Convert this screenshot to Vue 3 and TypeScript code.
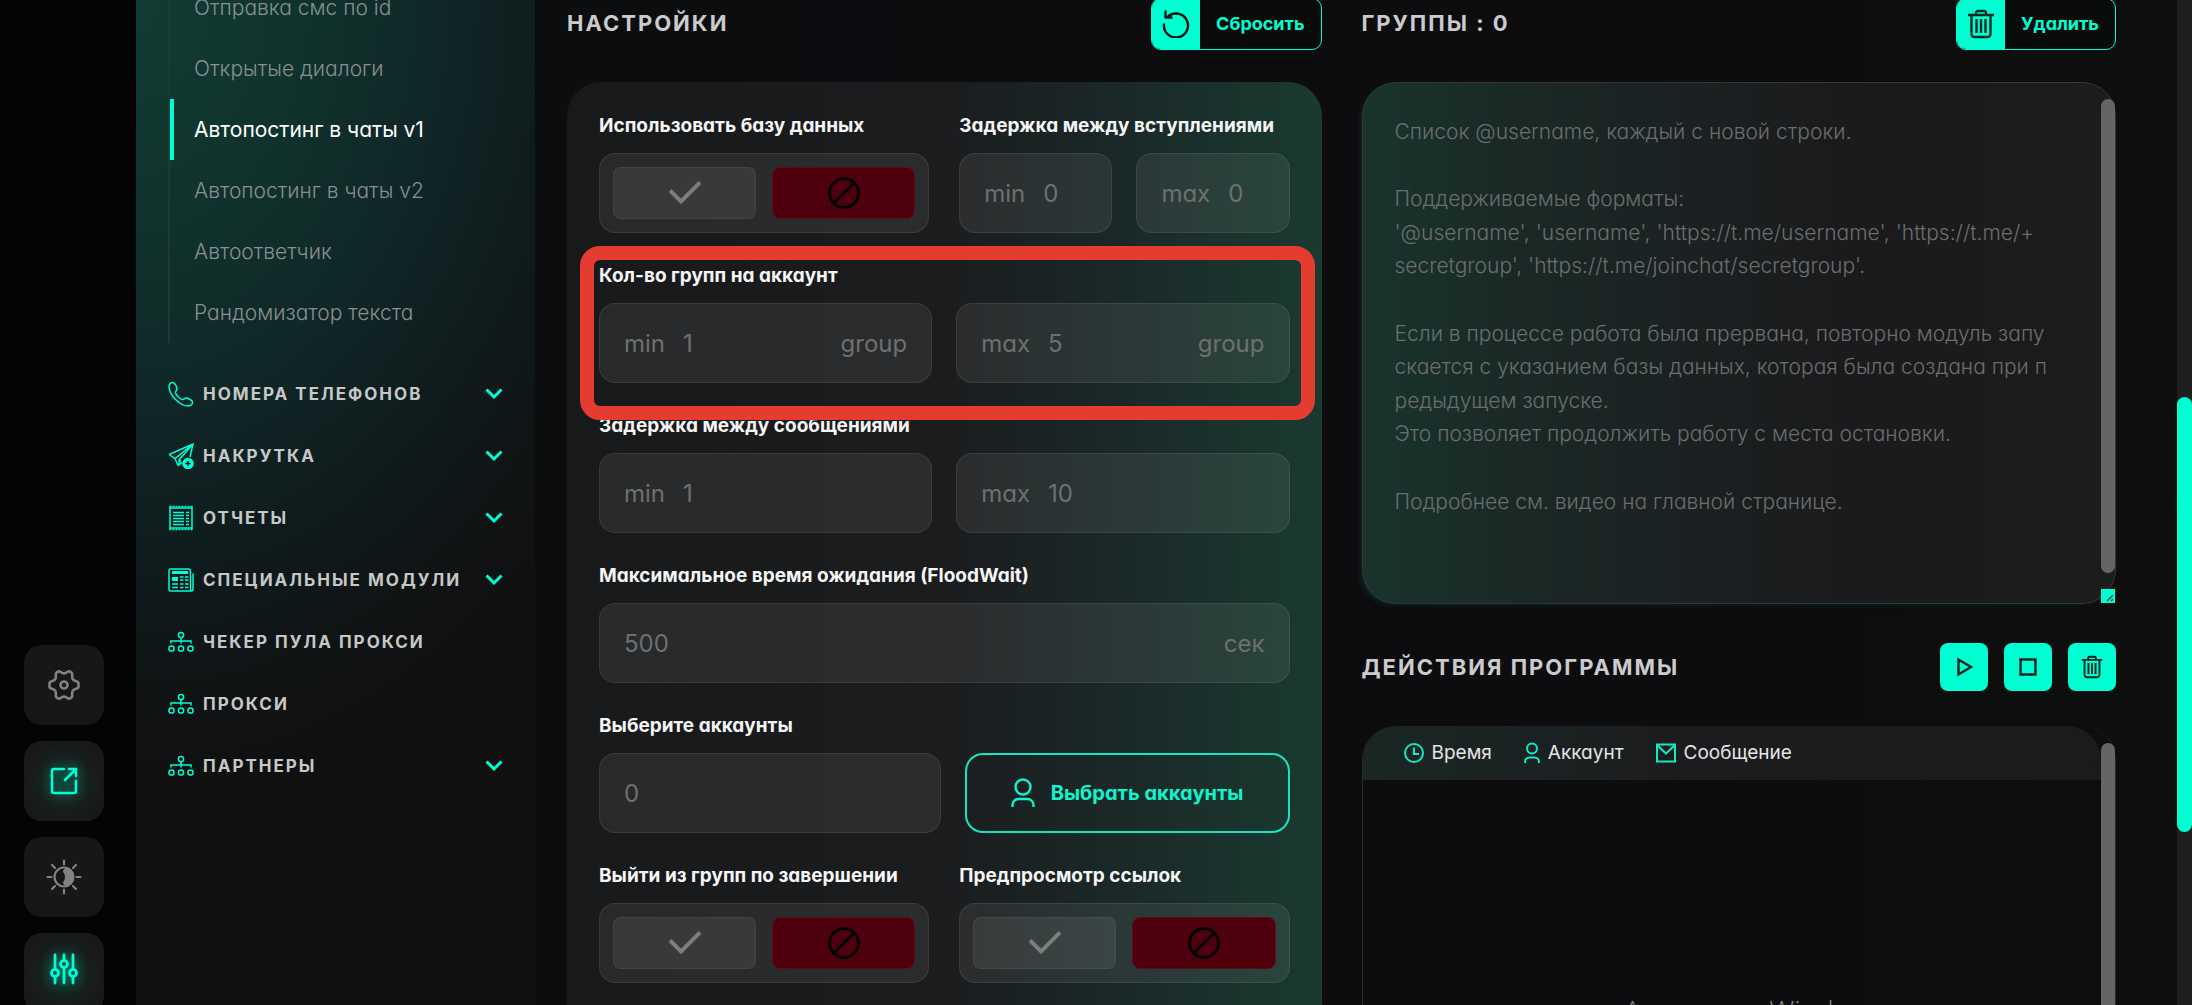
<script setup lang="ts">
import { ref } from 'vue'

interface MenuItem { title: string; icon: 'phone' | 'send' | 'report' | 'news' | 'tree'; expandable: boolean }
interface RailItem { title: string; icon: 'gear' | 'open' | 'theme' | 'tune'; active: boolean }

const subItems: string[] = [
  'Отправка смс по id',
  'Открытые диалоги',
  'Автопостинг в чаты v1',
  'Автопостинг в чаты v2',
  'Автоответчик',
  'Рандомизатор текста',
]
const activeSub = ref(2)

const menu: MenuItem[] = [
  { title: 'Номера телефонов', icon: 'phone', expandable: true },
  { title: 'Накрутка', icon: 'send', expandable: true },
  { title: 'Отчеты', icon: 'report', expandable: true },
  { title: 'Специальные модули', icon: 'news', expandable: true },
  { title: 'Чекер пула прокси', icon: 'tree', expandable: false },
  { title: 'Прокси', icon: 'tree', expandable: false },
  { title: 'Партнеры', icon: 'tree', expandable: true },
]

const rail: RailItem[] = [
  { title: 'Параметры', icon: 'gear', active: false },
  { title: 'Открыть', icon: 'open', active: true },
  { title: 'Тема', icon: 'theme', active: false },
  { title: 'Фильтры', icon: 'tune', active: true },
]

const useDatabase = ref(false)
const leaveGroups = ref(false)
const linkPreview = ref(false)

const groups = ref('')
const groupsHint = [
  'Список @username, каждый с новой строки.',
  '',
  'Поддерживаемые форматы:',
  "'@username', 'username', 'https://t.me/username', 'https://t.me/+",
  "secretgroup', 'https://t.me/joinchat/secretgroup'.",
  '',
  'Если в процессе работа была прервана, повторно модуль запу',
  'скается с указанием базы данных, которая была создана при п',
  'редыдущем запуске.',
  'Это позволяет продолжить работу с места остановки.',
  '',
  'Подробнее см. видео на главной странице.',
].join('\n')
</script>

<template>
  <div class="app">
    <nav class="rail" aria-label="Быстрые действия">
      <button v-for="item in rail" :key="item.icon" type="button" class="rail-btn" :class="{ active: item.active }" :aria-label="item.title">
        <svg v-if="item.icon === 'gear'" width="32" height="32" viewBox="0 0 32 32" fill="none" stroke="currentColor" stroke-width="2.6" stroke-linejoin="round">
          <path d="M10.500 2.400 C12.500 1.600 12.600 4.400 16 4.400 S19.500 1.600 21.500 2.400 L23.500 3.500 C25.300 4.900 23 7.500 24.800 10.300 C26.500 13 30.500 11.600 30.500 14.200 V17.800 C30.500 20.400 26.500 19 24.800 21.700 C23 24.500 25.300 27.100 23.500 28.500 L21.500 29.600 C19.500 30.400 19.400 27.600 16 27.600 S12.500 30.400 10.500 29.600 L8.500 28.500 C6.700 27.100 9 24.500 7.200 21.700 C5.500 19 1.500 20.400 1.500 17.800 V14.200 C1.500 11.600 5.500 13 7.200 10.300 C9 7.500 6.700 4.900 8.500 3.500 Z" />
          <circle cx="16" cy="16" r="3.500" />
        </svg>
        <svg v-else-if="item.icon === 'open'" width="32" height="32" viewBox="0 0 32 32" fill="none" stroke="currentColor" stroke-width="2.6" stroke-linejoin="round" stroke-linecap="round">
          <path d="M16 4H6a2 2 0 0 0-2 2v20a2 2 0 0 0 2 2h20a2 2 0 0 0 2-2V16M21 4h7v7M28 4 17 15" />
        </svg>
        <svg v-else-if="item.icon === 'theme'" width="36" height="36" viewBox="0 0 36 36" fill="none" stroke="currentColor" stroke-width="2.200" stroke-linecap="round">
          <circle cx="18" cy="18" r="9.500" />
          <path d="M18 1.500v4M18 30.500v4M1.500 18h4M30.500 18h4M6 6l3 3M27 27l3 3M6 30l3-3M27 9l3-3" />
          <path d="M20.500 8.800a9.500 9.500 0 0 1 0 18.400q-3.500-1.500-3.500-4 2-2.200 2-5.200t-2-5.200q0-2.500 3.500-4z" fill="currentColor" stroke="none" />
        </svg>
        <svg v-else width="32" height="42" viewBox="0 0 32 42" fill="none" stroke="currentColor" stroke-width="2.800" stroke-linecap="round">
          <path d="M7 3v14M7 25v6M16 3v5M16 16v15M25 3v14M25 25v6" />
          <circle cx="7" cy="21" r="3.500" /><circle cx="16" cy="12" r="3.500" /><circle cx="25" cy="21" r="3.500" />
        </svg>
      </button>
    </nav>

    <aside class="sidebar">
      <ul class="sub">
        <li v-for="(item, i) in subItems" :key="item">
          <a href="#" :class="{ current: i === activeSub }" @click.prevent="activeSub = i">{{ item }}</a>
        </li>
      </ul>
      <ul class="menu">
        <li v-for="item in menu" :key="item.title">
          <a href="#" @click.prevent>
            <svg v-if="item.icon === 'phone'" class="mi" viewBox="0 0 26 26">
              <path d="M1 5.500C1 3 3.500 1 5 1.500 7 2 9 6 9 8c0 1.500-2 2.500-1.500 4 .8 2.200 4.300 5.700 6.500 6.500 1.500.5 2.500-1.500 4-1.500 2 0 6 2 6.500 4 .5 1.500-1.500 4-4 4C12 25 1 14 1 5.500z" />
            </svg>
            <svg v-else-if="item.icon === 'send'" class="mi" viewBox="0 0 26 26">
              <path d="M1 11.500 25 1 22 14M1 11.500 7 15.500 25 1 11 17v5l3-3M7 15.500l3 7M11 17l2 1" />
              <circle cx="20" cy="20.500" r="5" fill="#00fed3" /><path d="M20 18v5M17.500 20.500h5" stroke="#0f1a1b" />
            </svg>
            <svg v-else-if="item.icon === 'report'" class="mi" viewBox="0 0 26 26">
              <path d="M2 1.500v23M24 1.500v23M2 3h22M2 23h22" />
              <path d="M1.500 1.500h23M1.500 24.500h23" stroke-dasharray="2 1" />
              <path d="M5 7.500h11M5 10.500h11M5 13.500h11M5 16.500h11M5 19.500h11M18 7.500h3M18 10.500h3M18 13.500h3M18 16.500h3M18 19.500h3" />
            </svg>
            <svg v-else-if="item.icon === 'news'" class="mi" viewBox="0 0 26 26">
              <path d="M22.500 5.500V4a2 2 0 0 0-2-2H3a2 2 0 0 0-2 2v18a2 2 0 0 0 2 2h20a2 2 0 0 0 2-2V6.500M22.500 5v17a1.500 1.500 0 0 0 2 1.500" />
              <path d="M4 5.500h16" stroke-width="3" /><path d="M4 12h6" stroke-width="4" />
              <path d="M12 10h3.500M17 10h3.500M12 13h3.500M17 13h3.500M4 17h6M12 17h3.500M17 17h3.500M4 20.500h6M12 20.500h3.500M17 20.500h3.500" />
            </svg>
            <svg v-else class="mi" viewBox="0 0 26 26">
              <circle cx="13" cy="6" r="2.600" /><circle cx="3.500" cy="19.500" r="2.600" /><circle cx="13" cy="19.500" r="2.600" /><circle cx="22.500" cy="19.500" r="2.600" />
              <path d="M13 8.600V13M3 14.500V12h20v2.500M13 12v2.500" />
            </svg>
            <span>{{ item.title }}</span>
            <svg v-if="item.expandable" class="chev" viewBox="0 0 18 12"><path d="M1.500 1.500 9 9l7.500-7.500" /></svg>
          </a>
        </li>
      </ul>
    </aside>

    <main class="main">
      <section class="col">
        <header class="head">
          <h2>Настройки</h2>
          <button type="button" class="split-btn">
            <span class="split-icon">
              <svg width="28" height="28" viewBox="0 0 28 28" fill="none" stroke="#0b1513" stroke-width="2.400" stroke-linecap="round" stroke-linejoin="round">
                <path d="M2 14.500A12 12 0 1 0 5 7.500M3.500 1.500v6h6" />
              </svg>
            </span>
            <span class="split-text">Сбросить</span>
          </button>
        </header>

        <form class="card" @submit.prevent>
          <div class="highlight" aria-hidden="true"></div>

          <div class="pair wide">
            <div>
              <span id="lb-db" class="label">Использовать базу данных</span>
              <div class="toggle" role="group" aria-labelledby="lb-db">
                <button type="button" class="yes" aria-label="Да" :aria-pressed="useDatabase" @click="useDatabase = true"><svg viewBox="0 0 32 24"><path d="M1 9.500 12 20.500 31 1.500" /></svg></button>
                <button type="button" class="no" aria-label="Нет" :aria-pressed="!useDatabase" @click="useDatabase = false"><svg viewBox="0 0 32 32"><circle cx="16" cy="16" r="14.500" /><path d="M6 26 26 6" /></svg></button>
              </div>
            </div>
            <div>
              <label class="label" for="join-min">Задержка между вступлениями</label>
              <div class="pair">
                <div class="field"><span>min</span><input id="join-min" type="text" placeholder="0"></div>
                <div class="field"><span>max</span><input type="text" placeholder="0" aria-label="Максимальная задержка между вступлениями"></div>
              </div>
            </div>
          </div>

          <div>
            <label class="label" for="grp-min">Кол-во групп на аккаунт</label>
            <div class="pair">
              <div class="field"><span>min</span><input id="grp-min" type="text" placeholder="1"><span>group</span></div>
              <div class="field"><span>max</span><input type="text" placeholder="5" aria-label="Максимум групп на аккаунт"><span>group</span></div>
            </div>
          </div>

          <div>
            <label class="label" for="msg-min">Задержка между сообщениями</label>
            <div class="pair">
              <div class="field"><span>min</span><input id="msg-min" type="text" placeholder="1"></div>
              <div class="field"><span>max</span><input type="text" placeholder="10" aria-label="Максимальная задержка между сообщениями"></div>
            </div>
          </div>

          <div>
            <label class="label" for="flood">Максимальное время ожидания (FloodWait)</label>
            <div class="field"><input id="flood" type="text" placeholder="500"><span>сек</span></div>
          </div>

          <div>
            <label class="label" for="acc">Выберите аккаунты</label>
            <div class="pair accounts">
              <div class="field"><input id="acc" type="text" placeholder="0"></div>
              <button type="button" class="pick">
                <svg width="24" height="30" viewBox="0 0 24 30"><circle cx="12" cy="9" r="7.500" /><path d="M1.500 29v-2a6 6 0 0 1 6-6h9a6 6 0 0 1 6 6v2" /></svg>
                <span>Выбрать аккаунты</span>
              </button>
            </div>
          </div>

          <div class="pair wide">
            <div>
              <span id="lb-leave" class="label">Выйти из групп по завершении</span>
              <div class="toggle" role="group" aria-labelledby="lb-leave">
                <button type="button" class="yes" aria-label="Да" :aria-pressed="leaveGroups" @click="leaveGroups = true"><svg viewBox="0 0 32 24"><path d="M1 9.500 12 20.500 31 1.500" /></svg></button>
                <button type="button" class="no" aria-label="Нет" :aria-pressed="!leaveGroups" @click="leaveGroups = false"><svg viewBox="0 0 32 32"><circle cx="16" cy="16" r="14.500" /><path d="M6 26 26 6" /></svg></button>
              </div>
            </div>
            <div>
              <span id="lb-prev" class="label">Предпросмотр ссылок</span>
              <div class="toggle" role="group" aria-labelledby="lb-prev">
                <button type="button" class="yes" aria-label="Да" :aria-pressed="linkPreview" @click="linkPreview = true"><svg viewBox="0 0 32 24"><path d="M1 9.500 12 20.500 31 1.500" /></svg></button>
                <button type="button" class="no" aria-label="Нет" :aria-pressed="!linkPreview" @click="linkPreview = false"><svg viewBox="0 0 32 32"><circle cx="16" cy="16" r="14.500" /><path d="M6 26 26 6" /></svg></button>
              </div>
            </div>
          </div>
        </form>
      </section>

      <section class="col">
        <header class="head">
          <h2><label for="groups">Группы : 0</label></h2>
          <button type="button" class="split-btn">
            <span class="split-icon">
              <svg class="trash" width="28" height="30" viewBox="0 0 28 30">
                <path d="M1 6h26M9 5.500V4a2 2 0 0 1 2-2h6a2 2 0 0 1 2 2v1.500M4.500 6v19a3 3 0 0 0 3 3h13a3 3 0 0 0 3-3V6M9.500 10v14M14 10v14M18.500 10v14" />
              </svg>
            </span>
            <span class="split-text">Удалить</span>
          </button>
        </header>

        <div class="area">
          <textarea id="groups" v-model="groups" :placeholder="groupsHint"></textarea>
          <i class="thumb" aria-hidden="true"></i>
          <svg class="grip" viewBox="0 0 14 14" aria-hidden="true"><path d="M6 12l6-6M10 12l2-2" /></svg>
        </div>

        <header class="head actions">
          <h2>Действия программы</h2>
          <div class="btns">
            <button type="button" aria-label="Запустить"><svg width="20" height="20" viewBox="0 0 20 20"><path d="M4.500 2.500v15L17 10z" /></svg></button>
            <button type="button" aria-label="Остановить"><svg width="20" height="20" viewBox="0 0 20 20"><path d="M2.500 2.500h15v15h-15z" /></svg></button>
            <button type="button" aria-label="Очистить">
              <svg class="trash" width="22" height="24" viewBox="0 0 28 30">
                <path d="M1 6h26M9 5.500V4a2 2 0 0 1 2-2h6a2 2 0 0 1 2 2v1.500M4.500 6v19a3 3 0 0 0 3 3h13a3 3 0 0 0 3-3V6M9.500 10v14M14 10v14M18.500 10v14" />
              </svg>
            </button>
          </div>
        </header>

        <div class="log">
          <table>
            <thead>
              <tr>
                <th scope="col"><svg width="20" height="22" viewBox="0 0 20 22"><circle cx="10" cy="11" r="9" /><path d="M10 5.500V12h5" /></svg>Время</th>
                <th scope="col"><svg width="16" height="22" viewBox="0 0 16 22"><circle cx="8" cy="6.500" r="5" /><path d="M1 21v-1a4.500 4.500 0 0 1 4.500-4.500h5A4.500 4.500 0 0 1 15 20v1" /></svg>Аккаунт</th>
                <th scope="col"><svg width="20" height="22" viewBox="0 0 20 22"><path d="M1 2.500h18v17H1zM1 3l9 8.500L19 3" /></svg>Сообщение</th>
              </tr>
            </thead>
            <tbody></tbody>
          </table>
          <i class="thumb" aria-hidden="true"></i>
        </div>
      </section>
    </main>

    <p class="watermark">Активация Windows</p>
    <div class="page-scroll" aria-hidden="true"><i></i></div>
  </div>
</template>

<style>
body {
  background: #0d0d0f;
}
</style>

<style scoped>
* {
  box-sizing: border-box;
}

.app {
  --accent: #00fed3;
  --muted: #6e7070;
  position: relative;
  display: flex;
  height: 100vh;
  overflow: hidden;
  background: #0d0d0f;
  color: #f2f2f2;
  font-family: Inter, "Noto Sans", sans-serif;
  font-feature-settings: "cv11";
}

button,
input,
textarea {
  font: inherit;
  font-feature-settings: inherit;
  color: inherit;
}

button {
  padding: 0;
  border: 0;
  cursor: pointer;
}

ul {
  margin: 0;
  padding: 0;
  list-style: none;
}

a {
  color: inherit;
  text-decoration: none;
}

/* narrow rail */
.rail {
  flex: none;
  width: 136px;
  padding: 645px 0 0 24px;
  display: flex;
  flex-direction: column;
  gap: 16px;
  background: #040404;
}

.rail-btn {
  flex: none;
  width: 80px;
  height: 80px;
  border-radius: 18px;
  display: grid;
  place-items: center;
  background: #171717;
  color: #828282;
}

.rail-btn.active {
  color: var(--accent);
  background: radial-gradient(circle, #103a30 0, #18201e 44%, #181919 70%);
}

.rail-btn.active svg {
  filter: drop-shadow(0 0 6px rgba(0, 254, 211, 0.5));
}

/* sidebar */
.sidebar {
  flex: none;
  width: 399px;
  padding: 0 32px;
  background: radial-gradient(ellipse 600px 800px at 0 0, #113c33 0, #10342d 25%, #102727 50%, #0f1a1c 72%, #101213 90%, #101011 100%);
}

.sub {
  margin-top: -23px;
  border-left: 2px solid #1c3b36;
}

.sub a {
  display: block;
  height: 61px;
  border-left: 4px solid transparent;
  padding-left: 20px;
  font-size: 21px;
  font-weight: 300;
  line-height: 61px;
  color: #889091;
}

.sub a.current {
  font-weight: 400;
  color: #fff;
  border-left-color: var(--accent);
}

.menu {
  margin-top: 20px;
}

.menu a {
  display: flex;
  align-items: center;
  gap: 9px;
  height: 62px;
  font-size: 17px;
  font-weight: 700;
  letter-spacing: 2px;
  text-transform: uppercase;
  color: #c6c8c8;
}

.mi {
  flex: none;
  width: 26px;
  height: 26px;
  fill: none;
  stroke: #00fed3;
  stroke-width: 1.5;
}

.chev {
  width: 18px;
  height: 12px;
  margin-left: auto;
  fill: none;
  stroke: #00fed3;
  stroke-width: 3;
}

/* main */
.main {
  flex: 1;
  min-width: 0;
  display: grid;
  grid-template-columns: minmax(0, 1fr) minmax(0, 1fr);
  gap: 40px;
  padding: 0 76px 0 32px;
  background: linear-gradient(90deg, #0b0d0f, #0d0c0f 60%, #0d0e0e);
}

.head {
  display: flex;
  align-items: flex-start;
  justify-content: space-between;
  height: 82px;
}

.head h2 {
  margin: 0;
  font-size: 22px;
  font-weight: 700;
  line-height: 46px;
  letter-spacing: 2px;
  text-transform: uppercase;
  color: #cbcbcd;
}

.split-btn {
  display: flex;
  height: 52px;
  margin-top: -2px;
  overflow: hidden;
  border: 1px solid var(--accent);
  border-radius: 10px;
  background: #0a0c0b;
  color: var(--accent);
  font-size: 18px;
  font-weight: 700;
}

.split-icon {
  display: grid;
  place-items: center;
  width: 48px;
  height: 50px;
  background: var(--accent);
}

.split-text {
  padding: 0 16px;
  line-height: 50px;
}

.trash {
  fill: none;
  stroke: #0c2a24;
  stroke-width: 2.4;
}

/* settings card */
.card {
  position: relative;
  display: flex;
  flex-direction: column;
  gap: 29px;
  padding: 30px 32px 80px;
  border-radius: 34px;
  background: linear-gradient(90deg, #18191b 0, #1b1c1e 50%, #1a2827 72%, #1a3a31 100%);
}

.highlight {
  position: absolute;
  top: 164px;
  left: 13px;
  right: 7px;
  height: 174px;
  border: 14px solid #e43c30;
  border-radius: 20px;
  pointer-events: none;
}

.label {
  display: block;
  margin-bottom: 13px;
  font-size: 19px;
  font-weight: 700;
  line-height: 28px;
  white-space: nowrap;
  color: #f4f5f5;
}

.pair {
  display: grid;
  grid-template-columns: minmax(0, 1fr) minmax(0, 1fr);
  gap: 24px;
}

.pair.wide {
  gap: 30px;
}

.pair.accounts {
  grid-template-columns: minmax(0, 342fr) minmax(0, 325fr);
}

.field,
.toggle {
  display: flex;
  height: 80px;
  border: 1px solid rgba(255, 255, 255, 0.08);
  border-radius: 16px;
  background: rgba(255, 255, 255, 0.07);
}

.field {
  align-items: center;
  gap: 18px;
  padding: 0 24px;
  font-size: 24px;
  color: var(--muted);
}

.field input {
  flex: 1;
  width: 0;
  min-width: 0;
  padding: 0;
  border: 0;
  outline: 0;
  background: transparent;
}

.field input::placeholder {
  color: var(--muted);
  opacity: 1;
}

.toggle {
  gap: 16px;
  padding: 13px;
}

.toggle button {
  flex: 1;
  display: grid;
  place-items: center;
  border: 1px solid rgba(255, 255, 255, 0.06);
  border-radius: 8px;
}

.toggle .yes {
  background: rgba(255, 255, 255, 0.07);
}

.toggle .no {
  background: #50000d;
  border-color: #5c0c18;
}

.toggle svg {
  width: 32px;
  fill: none;
  stroke: #7c7d7d;
  stroke-width: 4;
}

.toggle .no svg {
  stroke: #000;
  stroke-width: 3;
}

.pick {
  display: flex;
  align-items: center;
  justify-content: center;
  gap: 16px;
  border: 2px solid #14e6c1;
  border-radius: 18px;
  background: transparent;
  color: #12f2cb;
  font-size: 20px;
  font-weight: 700;
}

.pick svg {
  fill: none;
  stroke: currentColor;
  stroke-width: 2.4;
}

/* groups */
.area {
  position: relative;
}

.area textarea {
  display: block;
  width: 100%;
  height: 522px;
  padding: 32px;
  resize: none;
  outline: 0;
  overflow: hidden;
  border: 1px solid #343637;
  border-radius: 34px;
  background: linear-gradient(90deg, #19342c 0, #1a2926 20%, #1b2122 42%, #1b1a1c 65%, #1c1c1c 100%);
  box-shadow: -4px 3px 4px -2px #0d2420;
  font-size: 21px;
  font-weight: 300;
  line-height: 1.6;
  white-space: pre;
}

.area textarea::placeholder {
  color: #6a6e6e;
  opacity: 1;
}

.thumb {
  position: absolute;
  right: 1px;
  top: 17px;
  width: 14px;
  height: 474px;
  border-radius: 7px;
  background: #666566;
}

.grip {
  position: absolute;
  right: 1px;
  bottom: 1px;
  width: 14px;
  height: 14px;
  background: var(--accent);
  stroke: #20524a;
  stroke-width: 1.5;
}

/* actions */
.head.actions {
  height: 83px;
  margin-top: 39px;
}

.head.actions h2 {
  line-height: 48px;
}

.btns {
  display: flex;
  gap: 16px;
}

.btns button {
  display: grid;
  place-items: center;
  width: 48px;
  height: 48px;
  border-radius: 8px;
  background: var(--accent);
}

.btns svg {
  fill: none;
  stroke: #07241f;
  stroke-width: 2.4;
}

.log {
  position: relative;
  height: 320px;
  border: solid #2a292c;
  border-width: 0 1px;
  border-radius: 34px 34px 0 0;
}

.log table {
  display: block;
  margin-right: 14px;
}

.log thead {
  display: block;
  height: 54px;
  border-radius: 34px 34px 0 0;
  background: linear-gradient(90deg, #1a2724 0, #1b2122 25%, #1c1b1d 45%, #1b1a1c 100%);
}

.log tr {
  display: flex;
  gap: 32px;
  padding-left: 41px;
}

.log th {
  display: flex;
  align-items: center;
  gap: 8px;
  padding: 0;
  font-size: 19px;
  font-weight: 400;
  line-height: 54px;
  color: #e4e5e5;
}

.log th svg {
  fill: none;
  stroke: #12e8c3;
  stroke-width: 2;
}

.log .thumb {
  right: 0;
  height: 400px;
}

.watermark {
  position: absolute;
  left: 1624px;
  top: 992px;
  margin: 0;
  font-family: "Open Sans", sans-serif;
  font-size: 28px;
  font-weight: 300;
  line-height: 36px;
  color: #88888a;
}

/* page scrollbar */
.page-scroll {
  position: absolute;
  top: 0;
  right: 0;
  bottom: 0;
  width: 15px;
  background: #1f1e20;
}

.page-scroll i {
  display: block;
  height: 435px;
  margin-top: 397px;
  border-radius: 8px;
  background: var(--accent);
}
</style>
